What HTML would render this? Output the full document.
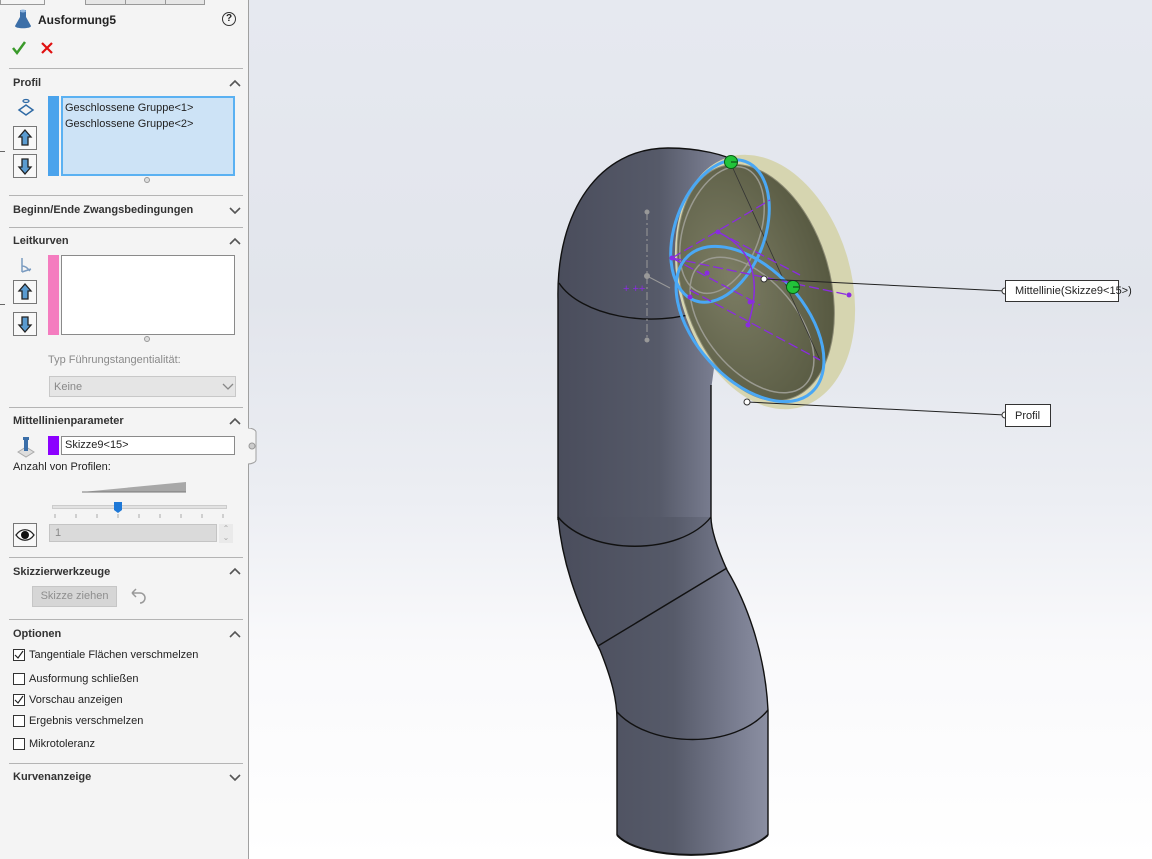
<!DOCTYPE html>
<html><head><meta charset="utf-8"><style>
*{margin:0;padding:0;box-sizing:border-box}
body{width:1152px;height:859px;overflow:hidden;position:relative;font-family:"Liberation Sans",sans-serif;font-size:11px;color:#222;background:#fff}
#vp{position:absolute;left:249px;top:0;width:903px;height:859px;background:linear-gradient(180deg,#e6e9f0 0%,#e2e5ec 35%,#eceef3 58%,#f9f9fb 75%,#fff 100%)}
#panel{position:absolute;left:0;top:0;width:249px;height:859px;background:#f4f4f4;border-right:1px solid #a0a0a0}
.a{position:absolute}
.hr{position:absolute;left:9px;width:234px;height:1px;background:#b4b4b4}
.h{position:absolute;left:13px;font-weight:bold;font-size:11px;color:#333}
.chev{position:absolute;left:229px;width:12px;height:8px}
.btn{position:absolute;left:13px;width:24px;height:24px;border:1px solid #777;background:#f8f8f8}
.cb{position:absolute;left:13px;width:12px;height:12px;border:1px solid #333;background:#fff}
.lbl{position:absolute;left:29px;font-size:11px;color:#222}
</style></head><body>
<div id="vp"></div>
<div id="panel">
 <div class="a" style="left:0;top:0;width:45px;height:5px;border:1px solid #999;border-top:none"></div>
 <div class="a" style="left:85px;top:0;width:120px;height:5px;border:1px solid #999;border-top:none;background:#e6e6e6"></div>
 <div class="a" style="left:125px;top:0;width:1px;height:5px;background:#999"></div>
 <div class="a" style="left:165px;top:0;width:1px;height:5px;background:#999"></div>
 <svg class="a" style="left:13px;top:9px" width="20" height="22"><path d="M7 1h6v7l5 9c0 3-16 3-16 0l5-9z" fill="#3c6fa8"/><ellipse cx="10" cy="2" rx="3" ry="1.5" fill="#8fb6e0"/></svg>
 <div class="a" style="left:38px;top:13px;font-weight:bold;font-size:12px">Ausformung5</div>
 <div class="a" style="left:222px;top:12px;width:14px;height:14px;border:1.5px solid #333;border-radius:50%;font-size:10px;font-weight:bold;text-align:center;line-height:11px">?</div>
 <svg class="a" style="left:11px;top:40px" width="50" height="16"><path d="M2 8l4 5 8-11" stroke="#3a9a2a" stroke-width="2.5" fill="none"/><path d="M31 3l10 10M41 3l-10 10" stroke="#e01010" stroke-width="2.2"/></svg>
 <div class="hr" style="top:68px"></div>
 <div class="h" style="top:77px">Profil</div>
 <svg class="chev" style="top:79px"><path d="M1 7l5-5 5 5" stroke="#555" stroke-width="1.6" fill="none"/></svg>
 <svg class="a" style="left:17px;top:98px" width="18" height="20"><ellipse cx="9" cy="3" rx="3" ry="1.5" stroke="#2f6aa5" fill="none" stroke-width="1.3"/><path d="M2 12l7-5 7 5-7 5z" stroke="#2f6aa5" fill="none" stroke-width="1.5"/></svg>
 <div class="btn" style="top:126px"><svg width="22" height="22"><path d="M11 3l6 7h-3v8h-6v-8h-3z" fill="#5a9bd0" stroke="#222" stroke-width="1.3"/></svg></div>
 <div class="btn" style="top:154px"><svg width="22" height="22"><path d="M11 19l6-7h-3v-8h-6v8h-3z" fill="#5a9bd0" stroke="#222" stroke-width="1.3"/></svg></div>
 <div class="a" style="left:48px;top:96px;width:11px;height:80px;background:#4aa3ec"></div>
 <div class="a" style="left:61px;top:96px;width:174px;height:80px;background:#cde3f6;border:2px solid #5ab1f2;padding:2px 2px;line-height:16px;font-size:11px;color:#222">Geschlossene Gruppe&lt;1&gt;<br>Geschlossene Gruppe&lt;2&gt;</div>
 <div class="a" style="left:144px;top:177px;width:6px;height:6px;border:1px solid #999;border-radius:50%;background:#ddd"></div>
 <div class="hr" style="top:195px"></div>
 <div class="h" style="top:204px">Beginn/Ende Zwangsbedingungen</div>
 <svg class="chev" style="top:206px"><path d="M1 2l5 5 5-5" stroke="#555" stroke-width="1.6" fill="none"/></svg>
 <div class="hr" style="top:227px"></div>
 <div class="h" style="top:235px">Leitkurven</div>
 <svg class="chev" style="top:237px"><path d="M1 7l5-5 5 5" stroke="#555" stroke-width="1.6" fill="none"/></svg>
 <svg class="a" style="left:17px;top:256px" width="18" height="20"><path d="M5 2v14M5 16l9-3M5 10c4 0 6 3 8 5" stroke="#7a9bc0" fill="none" stroke-width="1.5"/></svg>
 <div class="btn" style="top:280px"><svg width="22" height="22"><path d="M11 3l6 7h-3v8h-6v-8h-3z" fill="#5a9bd0" stroke="#222" stroke-width="1.3"/></svg></div>
 <div class="btn" style="top:312px"><svg width="22" height="22"><path d="M11 19l6-7h-3v-8h-6v8h-3z" fill="#5a9bd0" stroke="#222" stroke-width="1.3"/></svg></div>
 <div class="a" style="left:48px;top:255px;width:11px;height:80px;background:#f47cbf"></div>
 <div class="a" style="left:61px;top:255px;width:174px;height:80px;background:#fff;border:1px solid #8a8a8a"></div>
 <div class="a" style="left:144px;top:336px;width:6px;height:6px;border:1px solid #999;border-radius:50%;background:#ddd"></div>
 <div class="a" style="left:48px;top:354px;color:#8a8a8a">Typ Führungstangentialität:</div>
 <div class="a" style="left:49px;top:376px;width:187px;height:21px;background:#e5e5e5;border:1px solid #c8c8c8;color:#888;padding:4px 4px">Keine</div>
 <svg class="a" style="left:222px;top:382px" width="12" height="8"><path d="M1 2l5 5 5-5" stroke="#888" stroke-width="1.3" fill="none"/></svg>
 <div class="hr" style="top:407px"></div>
 <div class="h" style="top:415px">Mittellinienparameter</div>
 <svg class="chev" style="top:417px"><path d="M1 7l5-5 5 5" stroke="#555" stroke-width="1.6" fill="none"/></svg>
 <svg class="a" style="left:15px;top:435px" width="22" height="24"><path d="M3 17l8-5 8 5-8 5z" fill="#ddd" stroke="#aaa"/><rect x="9" y="3" width="4" height="13" fill="#3a6ea8"/><rect x="8" y="2" width="6" height="3" fill="#3a6ea8"/></svg>
 <div class="a" style="left:48px;top:436px;width:11px;height:19px;background:#8c00ff"></div>
 <div class="a" style="left:61px;top:436px;width:174px;height:19px;background:#fff;border:1px solid #8a8a8a;padding:2px 3px;font-size:11px">Skizze9&lt;15&gt;</div>
 <div class="a" style="left:13px;top:461px">Anzahl von Profilen:</div>
 <svg class="a" style="left:80px;top:480px" width="110" height="14"><path d="M2 12L106 2V12z" fill="#a8a8a8"/><path d="M2 12h104" stroke="#777"/></svg>
 <div class="a" style="left:52px;top:505px;width:175px;height:4px;background:#e2e2e2;border:1px solid #ccc"></div>
 <svg class="a" style="left:113px;top:501px" width="10" height="13"><path d="M1 1h8v8l-4 3-4-3z" fill="#1e78d7"/></svg>
 <svg class="a" style="left:52px;top:514px" width="180" height="6"><g stroke="#aaa"><path d="M3 0v4M24 0v4M45 0v4M66 0v4M87 0v4M108 0v4M129 0v4M150 0v4M171 0v4"/></g></svg>
 <div class="btn" style="top:523px"><svg width="22" height="22"><path d="M2 11c5-7 13-7 18 0-5 7-13 7-18 0z" fill="#fff" stroke="#222" stroke-width="1.3"/><circle cx="11" cy="11" r="4" fill="#111"/></svg></div>
 <div class="a" style="left:49px;top:524px;width:168px;height:18px;background:#dadada;border:1px solid #c4c4c4;color:#888;padding:2px 5px;font-size:11px">1</div>
 <div class="a" style="left:219px;top:524px;width:14px;height:19px;background:#eaeaea;color:#aaa;font-size:8px;line-height:9px;text-align:center">⌃<br>⌄</div>
 <div class="hr" style="top:557px"></div>
 <div class="h" style="top:566px">Skizzierwerkzeuge</div>
 <svg class="chev" style="top:567px"><path d="M1 7l5-5 5 5" stroke="#555" stroke-width="1.6" fill="none"/></svg>
 <div class="a" style="left:32px;top:586px;width:85px;height:21px;background:#d6d6d6;border:1px solid #c6c6c6;color:#8e8e8e;text-align:center;line-height:19px">Skizze ziehen</div>
 <svg class="a" style="left:129px;top:587px" width="20" height="18"><path d="M3 6h8a5 5 0 0 1 0 10M3 6l4-4M3 6l4 4" stroke="#999" stroke-width="1.5" fill="none"/></svg>
 <div class="hr" style="top:619px"></div>
 <div class="h" style="top:628px">Optionen</div>
 <svg class="chev" style="top:630px"><path d="M1 7l5-5 5 5" stroke="#555" stroke-width="1.6" fill="none"/></svg>
 <div class="cb" style="top:649px"><svg width="10" height="10" style="display:block"><path d="M1 5l3 3 5-7" stroke="#222" stroke-width="1.2" fill="none"/></svg></div><div class="lbl" style="top:649px">Tangentiale Flächen verschmelzen</div>
 <div class="cb" style="top:673px"></div><div class="lbl" style="top:673px">Ausformung schließen</div>
 <div class="cb" style="top:694px"><svg width="10" height="10" style="display:block"><path d="M1 5l3 3 5-7" stroke="#222" stroke-width="1.2" fill="none"/></svg></div><div class="lbl" style="top:694px">Vorschau anzeigen</div>
 <div class="cb" style="top:715px"></div><div class="lbl" style="top:715px">Ergebnis verschmelzen</div>
 <div class="cb" style="top:738px"></div><div class="lbl" style="top:738px">Mikrotoleranz</div>
 <div class="hr" style="top:763px"></div>
 <div class="h" style="top:771px">Kurvenanzeige</div>
 <svg class="chev" style="top:773px"><path d="M1 2l5 5 5-5" stroke="#555" stroke-width="1.6" fill="none"/></svg>
 <div class="a" style="left:0;top:151px;width:5px;height:1px;background:#666"></div>
 <div class="a" style="left:0;top:304px;width:5px;height:1px;background:#666"></div>
</div>
<svg class="a" style="left:246px;top:428px" width="12" height="38"><path d="M2 0h0c4 0 8 2 8 4v28c0 2-4 4-8 4" fill="#f4f4f4" stroke="#a0a0a0"/><circle cx="6" cy="18" r="3" fill="#ccc" stroke="#999"/></svg>
<svg class="a" style="left:0;top:0" width="1152" height="859">
<defs>
<linearGradient id="pg" x1="0" x2="1" y1="0" y2="0"><stop offset="0" stop-color="#4a4d5c"/><stop offset="0.55" stop-color="#565a69"/><stop offset="0.85" stop-color="#7a7e91"/><stop offset="1" stop-color="#8b8fa2"/></linearGradient>
<radialGradient id="ig" cx="0.35" cy="0.45" r="0.7"><stop offset="0" stop-color="#7c7d64"/><stop offset="1" stop-color="#55573f"/></radialGradient>
</defs>
<path d="M558,300 C556,210 600,148 668,148 C705,148 730,156 742,165 L711,390 L711,520 L558,520 Z" fill="url(#pg)"/>
<path d="M558,517 C562,560 575,600 600,650 C612,680 617,700 617,720 L617,835 C640,860 740,862 768,835 L768,710 C765,650 745,600 727,570 C718,550 711,530 711,517 Z" fill="url(#pg)"/>
<g stroke="#111" fill="none" stroke-width="1.4">
<path d="M558,300 C556,210 600,148 668,148 C700,148 725,155 738,162"/>
<path d="M558,300 L558,520"/><path d="M711,385 L711,517"/>
<path d="M559,283 C580,315 650,330 705,310"/>
<path d="M558,517 C590,556 680,556 711,517"/>
<path d="M558,517 C562,560 575,600 600,650 C612,680 617,700 617,720 L617,835"/>
<path d="M711,517 C711,530 718,550 727,570 C745,600 765,650 768,710 L768,835"/>
<path d="M598,646 L727,568"/>
<path d="M617,712 C650,748 735,750 768,710"/>
<path d="M617,835 C640,861 740,862 768,835" stroke-width="2"/>
</g>
<g transform="rotate(-16 765 282)">
<ellipse cx="765" cy="282" rx="86" ry="130" fill="#d6d5b0"/>
<ellipse cx="756" cy="280" rx="74" ry="121" fill="url(#ig)" stroke="#8b8a73"/>
</g>
<g stroke="#9a9a90" fill="none" stroke-width="1.5">
<ellipse cx="722" cy="230" rx="38" ry="66" transform="rotate(20 722 230)"/>
<ellipse cx="752" cy="325" rx="45" ry="80" transform="rotate(-40 752 325)"/>
</g>
<path d="M731,164 L820,360" stroke="#333" stroke-width="0.8"/>
<g stroke="#4aa8f5" stroke-width="3" fill="none">
<ellipse cx="720" cy="231" rx="45" ry="74" transform="rotate(20 720 231)"/>
<ellipse cx="750" cy="324" rx="55" ry="92" transform="rotate(-42 750 324)"/>
</g>
<g stroke="#8a2be2" stroke-width="1.3" fill="none" stroke-dasharray="10 4">
<path d="M672,258 L770,200"/><path d="M672,258 L849,295"/><path d="M690,290 L820,360"/><path d="M718,232 L800,275"/><path d="M672,258 L760,305"/>
</g>
<path d="M718,232 C745,245 765,270 748,325" stroke="#8a2be2" stroke-width="1.5" fill="none"/>
<g fill="#8a2be2"><circle cx="672" cy="258" r="2.5"/><circle cx="718" cy="232" r="2.5"/><circle cx="849" cy="295" r="2.5"/><circle cx="707" cy="273" r="2.5"/><circle cx="748" cy="325" r="2.5"/><circle cx="690" cy="297" r="2.5"/><circle cx="750" cy="302" r="2.5"/></g>
<text x="623" y="292" fill="#8a2be2" font-size="11" font-family="Liberation Sans">+ ++</text>
<g stroke="#999" stroke-width="1" fill="#999"><path d="M647,212 V340" stroke-dasharray="8 3 2 3"/><path d="M647,276 L670,288"/><circle cx="647" cy="212" r="2"/><circle cx="647" cy="276" r="2.5"/><circle cx="647" cy="340" r="2"/></g>
<circle cx="731" cy="162" r="6.5" fill="#22c43a" stroke="#0a5a15"/>
<circle cx="793" cy="287" r="6.5" fill="#22c43a" stroke="#0a5a15"/>
<path d="M731,162 h6 M793,287 h6" stroke="#0a3a10"/>
<path d="M764,279 L1005,291" stroke="#222"/>
<path d="M747,402 L1005,415" stroke="#222"/>
<circle cx="764" cy="279" r="3" fill="#fff" stroke="#333"/>
<circle cx="747" cy="402" r="3" fill="#fff" stroke="#333"/>
<circle cx="1005" cy="291" r="3" fill="#fff" stroke="#333"/>
<circle cx="1005" cy="415" r="3" fill="#fff" stroke="#333"/>
</svg>
<div class="a" style="left:1005px;top:280px;width:114px;height:22px;background:#fff;border:1px solid #333;padding:4px 9px;font-size:11px">Mittellinie(Skizze9&lt;15&gt;)</div>
<div class="a" style="left:1005px;top:404px;width:46px;height:23px;background:#fff;border:1px solid #333;padding:5px 9px;font-size:11px">Profil</div>
</body></html>
